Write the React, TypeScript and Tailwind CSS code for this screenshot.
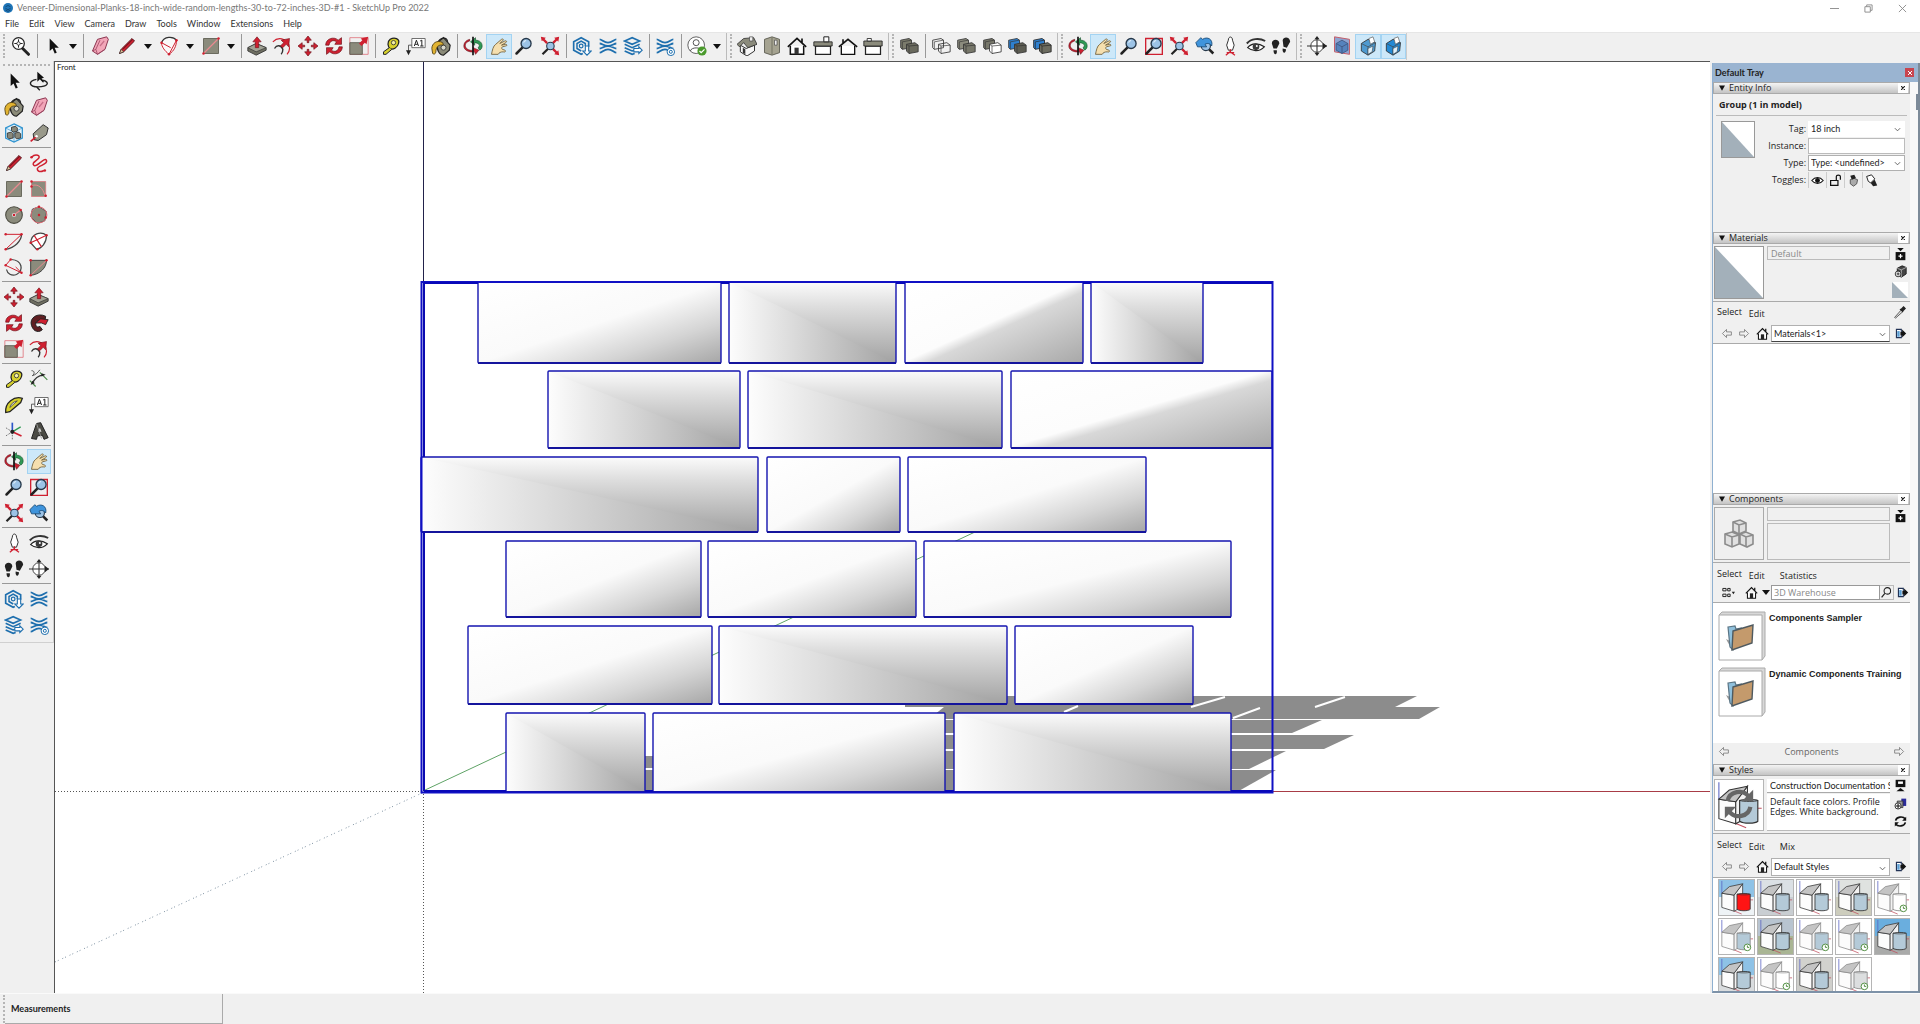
import React, { useState } from 'react'
import clsx from 'clsx'

const RED = '#cf2030'
const STONE = '#8b8b7c'
const BLUE = '#1e6fae'

const magnifier = (
  <>
    <path d="M10 14 3 21" stroke="#222" strokeWidth="3" strokeLinecap="round" />
    <circle cx="14.5" cy="9" r="6" fill="#9cc3e6" stroke="#26384a" strokeWidth="1.6" />
    <path d="M11.5 8a3.5 3.5 0 0 1 3-2.5" stroke="#e4f1fb" strokeWidth="1.3" />
  </>
)

const waves = (
  <path
    d="M2 4c3 0 5 4 10 4s7-4 10-4M2 9c3 0 5 3 10 3s7-3 10-3M2 15c3 0 5-3 10-3s7 3 10 3M2 20c3 0 5-4 10-4s7 4 10 4"
    stroke={BLUE}
    strokeWidth="2.2"
  />
)

const orbit = (
  <>
    <path d="M8 6C4 7 2 10 3 13s5 5 10 4l-1-3 7 3-4 5-1-3C7 20 1 17 1 12 1 8 4 5 8 4Z" fill={RED} stroke="#5a1018" strokeWidth=".7" />
    <path d="M15 5c5 0 8 3 8 7 0 2-1 4-3 5l-2-3c2-1 2-3 1-4s-3-2-5-2v3l-5-4 6-5Z" fill="#2f9a55" stroke="#124a26" strokeWidth=".7" />
    <path d="M12 1v22" stroke="#111" strokeWidth="2" />
  </>
)

const hand = (
  <path
    d="M3 22c1-5 2-10 5-12l7-6c1-1 3 0 2 1l-4 4 6-3c2-1 3 1 1 2l-5 3 5-1c2 0 2 2 0 2l-4 1c-1 1-1 2 0 3l3 1c2 1 0 3-2 2-3 0-5 1-6 3Z"
    fill="#f5dfae"
    stroke="#6e5a34"
    strokeWidth="1"
  />
)

const cursor = <path d="m8 3 0 15 3.500-3 2.500 6 2.500-1-2.500-6h5Z" fill="#111" />

const eraser = (
  <>
    <path d="M9 4 20 1l2 3-4 12-9 6-6-4Z" fill="#f2a6b8" stroke="#8a3550" strokeWidth="1.2" />
    <path d="m3 18 4-2 2 6M7 16 12 5M9 22l9-6" stroke="#a04864" strokeWidth="1" />
    <path d="m12 12 5-6" stroke="#c76f89" strokeWidth="1.500" />
  </>
)

const pencil = (
  <>
    <path d="m3 21 2-5L18 3l3 3L8 19Z" fill={RED} stroke="#4c0d14" strokeWidth="1.1" />
    <path d="m3 21 2-5 3 3Z" fill="#e8c79a" stroke="#333" strokeWidth=".8" />
    <path d="M7 16 19 4" stroke="#5d0f18" strokeWidth="1" />
  </>
)

const redDots = (points: [number, number][]) =>
  points.map(([x, y]) => <circle key={`${x}-${y}`} cx={x} cy={y} r="1.5" fill={RED} />)

const move = (
  <path
    d="m12 0 4 5h-3v3h-2V5H8Zm0 24 4-5h-3v-3h-2v3H8ZM0 12l5-4v3h3v2H5v3Zm24 0-5-4v3h-3v2h3v3Z"
    fill={RED}
    stroke="#6b0d16"
    strokeWidth=".8"
  />
)

const rotate = (
  <>
    <path d="M2 11c0-8 10-11 15-6l4-3v8h-8l2-3c-4-3-8-1-9 4Z" fill={RED} stroke="#6b0d16" strokeWidth=".8" />
    <path d="M22 13c0 8-10 11-15 6l-4 3v-8h8l-2 3c4 3 8 1 9-4Z" fill={RED} stroke="#6b0d16" strokeWidth=".8" />
  </>
)

const scale = (
  <>
    <path d="M1 2h22v20H1Z" stroke="#e0737d" strokeWidth="1" />
    <path d="M1 8h15v14H1Z" fill={STONE} stroke="#55554a" />
    <path d="m12 9 4-4-2-2 9-2-2 9-2-2-4 4Z" fill={RED} />
  </>
)

const pushPull = (
  <>
    <path d="m1 14 10-5 12 5v3l-12 6L1 18Z" fill="#6e6e61" stroke="#333" strokeWidth="1" />
    <path d="m1 14 10-5 12 5-12 5Z" fill="#a2a294" stroke="#333" strokeWidth=".8" />
    <path d="m12 1 5 6h-3v7h-4V7H7Z" fill={RED} stroke="#6b0d16" strokeWidth=".7" />
  </>
)

const offset = (
  <>
    <path d="M1 7C9-1 21 5 21 15c0 3-1 5-3 7" stroke={RED} strokeWidth="1.4" />
    <path d="M3 15c3-5 8-4 10 1 0 2 0 4-2 6" stroke="#333" strokeWidth="1.7" />
    <path d="m10 12 4-4-3-3 10-2-1 10-3-3-4 4Z" fill={RED} stroke="#6b0d16" strokeWidth=".7" />
  </>
)

const tape = (
  <>
    <path d="M11 4c5-3 12-1 10 5-1 5-7 8-10 6S7 7 11 4Z" fill="#d6d02c" stroke="#222" strokeWidth="1.5" />
    <circle cx="15" cy="8" r="2.600" fill="#f3f0a5" stroke="#333" />
    <path d="m10 14-7 5v3h3l7-6" fill="#d6d02c" stroke="#222" strokeWidth="1.2" />
  </>
)

const textTool = (
  <>
    <path d="M7 3h16v11H7Z" fill="#fff" stroke="#555" strokeWidth="1" />
    <path d="m10 12 2.500-7 2.500 7M11 10h3M17 6l2-1v7M17 12h4" stroke="#222" strokeWidth="1.2" />
    <path d="M7 11H3v8" stroke="#444" />
    <path d="m0 17 6 0-3 6Z" fill="#222" />
  </>
)

const bucket = (
  <>
    <path d="m8 8 7-6 8 9-1 6-7 6c-5 0-9-7-7-15Z" fill="#8a8a78" stroke="#222" strokeWidth="1.400" />
    <path d="M8 8C11 2 19 0 20 7" stroke="#222" strokeWidth="1.500" />
    <path d="M14 8C7 4 1 9 1 15l1 6c3 2 4-1 4-4 1-5 4-7 9-6Z" fill="#e2b432" stroke="#4a3a10" strokeWidth="1" />
    <circle cx="15" cy="14" r="3" fill="#d8d8ca" stroke="#333" />
  </>
)

const extentArrows = (
  <>
    <path d="m1 1 6 1-1.500 1.500 4 4-2 2-4-4L2 6ZM23 1l-1 6-1.500-1.500-4 4-2-2 4-4L17 2ZM23 23l-6-1 1.500-1.500-4-4 2-2 4 4L22 17Z" fill={RED} />
    <path d="M10 15 3 22" stroke="#222" strokeWidth="2.600" />
    <circle cx="12.500" cy="12" r="4.500" fill="#9cc3e6" stroke="#26384a" strokeWidth="1.300" />
  </>
)

const warehouse = (
  <>
    <path d="M20 13V7l-9-5-9 5v10l9 5 2-1" stroke={BLUE} strokeWidth="2" />
    <path d="M16 12V9l-5-3-5 3v6l5 3" stroke={BLUE} strokeWidth="1.800" />
    <circle cx="11" cy="12" r="2.200" stroke={BLUE} strokeWidth="1.500" />
    <path d="M16 12h4v6h3l-5 5-5-5h3Z" fill="#fff" stroke={BLUE} strokeWidth="1.300" />
  </>
)

const layout = (
  <>
    <path d="m2 6 9-4 9 4-9 4ZM2 10l9 4 9-4M2 14l9 4 3-1M2 18l9 4 3-1" stroke={BLUE} strokeWidth="1.900" />
    <path d="M13 15h6v-2l4 4-4 4v-2h-6Z" fill="#fff" stroke={BLUE} strokeWidth="1.300" />
  </>
)

const extManager = (
  <>
    {waves}
    <circle cx="19" cy="19" r="4.500" fill="#fff" stroke={BLUE} strokeWidth="1.200" />
    <circle cx="19" cy="19" r="1.800" stroke={BLUE} strokeWidth="1.200" />
  </>
)

const solid = (back: string, front: string, line = '#333') => (
  <>
    <path d="m2 5 10-2 3 2v9L4 16l-2-2Z" fill={back} stroke={line} strokeWidth="1" />
    <path d="m9 10 10-2 4 3v8l-11 2-3-3Z" fill={front} stroke={line} strokeWidth="1" />
    <path d="m9 10 3 2 11-1M12 12v9M15 5 4 7v9" stroke={line} strokeWidth=".8" />
  </>
)

const cube = (fill: string) => (
  <>
    <path d="m4 9 8-5 9 4-1 10-8 5-8-5Z" fill={fill} stroke="#333" strokeWidth="1" />
    <path d="m4 9 8 4 9-5M12 13v10" stroke="#444" strokeWidth=".8" />
    <path d="m13 3 5-2 2 6-5 3Z" fill="#fff" stroke="#555" strokeWidth=".8" />
    <path d="m12 15 6-3-1 7-5 3Z" fill="#dff0fa" stroke="#444" strokeWidth=".7" />
  </>
)

const homeIcon = (
  <>
    <path d="M4 12v10h16V12" fill="#fff" stroke="#111" strokeWidth="1.800" />
    <path d="M1 13 12 3l11 10M18 3v5" stroke="#111" strokeWidth="2" />
    <path d="M9 14h5v8H9Z" fill="#333" />
  </>
)

const icons: Record<string, React.ReactNode> = {
  search: (
    <>
      <path d="m14 15 7 7" stroke="#222" strokeWidth="3.500" strokeLinecap="round" />
      <circle cx="9" cy="9" r="7" fill="#fff" stroke="#222" strokeWidth="1.500" />
      <path d="M9 4v10M4 9h10" stroke="#222" strokeWidth="1.200" />
      <circle cx="9" cy="9" r="2" fill="#fff" stroke="#222" />
    </>
  ),
  cursor,
  eraser,
  pencil,
  arc: (
    <>
      <path d="M3 8C8-1 20 1 21 5c0 7-3 13-9 17C6 20 1 15 3 8Z" fill="#fafafa" />
      <path d="M3 8C6 0 17 0 21 5" stroke="#333" strokeWidth="1.500" />
      <path d="M21 5c0 7-3 13-9 17M3 8c0 5 4 10 9 14M3 8l11 6M21 5l-9 17" stroke={RED} strokeWidth="1.200" />
      {redDots([[3, 8], [21, 5], [12, 22]])}
    </>
  ),
  rectangle: (
    <>
      <path d="M3 3h18v18H3Z" fill={STONE} stroke="#5a5a4d" />
      <path d="M3 21 21 3" stroke="#e98a90" strokeWidth="1.400" />
      {redDots([[3, 21], [21, 3]])}
    </>
  ),
  rotatedRect: (
    <>
      <path d="M3 3h17v18H3Z" fill={STONE} stroke="#d77b80" />
      <path d="M3 8c8-3 14 3 16 12" stroke="#e98a90" strokeWidth="1.200" />
      {redDots([[3, 3], [3, 9], [20, 20]])}
    </>
  ),
  circle: (
    <>
      <circle cx="12" cy="12" r="10" fill={STONE} stroke="#4d4d42" strokeWidth="1.300" />
      <path d="m12 12 8-6" stroke="#e98a90" strokeWidth="1.300" />
      <circle cx="12" cy="12" r="2.500" fill="#ddd" />
      {redDots([[12, 12], [20, 6]])}
    </>
  ),
  polygon: (
    <>
      <path d="m12 2 9 6-2 11-9 3-8-8 2-9Z" fill={STONE} stroke="#555" strokeWidth="1.200" />
      <circle cx="12" cy="12" r="9.500" stroke="#dc6b73" strokeWidth="1.200" />
      {redDots([[12, 12], [12, 2], [20, 15]])}
    </>
  ),
  lineArc: (
    <>
      <path d="M21 4c0 8-8 16-19 18" stroke="#444" strokeWidth="1.600" />
      <path d="M2 4h19L2 22" stroke={RED} strokeWidth="1.200" />
      {redDots([[2, 4], [21, 4], [2, 22]])}
    </>
  ),
  twoArc: (
    <>
      <path d="M2 14C3 3 14 0 21 5c0 9-6 16-12 17Z" fill="#fff" stroke="#444" strokeWidth="1.500" />
      <path d="m6 5 9 14M2 14 21 5" stroke={RED} strokeWidth="1.400" />
      {redDots([[2, 14], [21, 5], [10, 22]])}
    </>
  ),
  threeArc: (
    <>
      <path d="M9 3c13 1 15 13 6 18-6 2-11-1-12-6" stroke="#444" strokeWidth="1.500" />
      <path d="M8 3 2 10l19 9-7-7" stroke={RED} strokeWidth="1.200" />
      {redDots([[2, 10], [21, 19], [8, 3]])}
    </>
  ),
  pie: (
    <>
      <path d="M2 4h19c0 9-8 17-19 18Z" fill={STONE} stroke="#444" strokeWidth="1.200" />
      <path d="M2 22 21 4" stroke="#e98a90" strokeWidth="1.200" />
      {redDots([[2, 4], [21, 4], [2, 22]])}
    </>
  ),
  freehand: (
    <>
      <path d="M3 5c5-5 12-2 8 2s-8 5-5 8 13-11 15-6-11 6-11 10 4 4 8 2" stroke={RED} strokeWidth="1.800" />
      {redDots([[3, 5], [19, 21]])}
    </>
  ),
  pushPull,
  offset,
  move,
  rotate,
  scale,
  tape,
  text: textTool,
  bucket,
  orbit,
  hand,
  zoom: magnifier,
  extents: extentArrows,
  warehouse,
  waves,
  layout,
  extManager,
  user: (
    <>
      <circle cx="11" cy="11" r="10" fill="#fff" stroke="#555" strokeWidth="1.100" />
      <circle cx="11" cy="8" r="3.600" stroke="#555" strokeWidth="1.200" />
      <path d="M4 18c1-5 13-5 14 0" stroke="#555" strokeWidth="1.200" />
      <circle cx="18" cy="18" r="5.500" fill="#4a9a2c" />
      <path d="m15 18 2 2 4-4" stroke="#fff" strokeWidth="1.500" />
    </>
  ),
  iso: (
    <>
      <path d="m4 11 7 4 10-4v7l-9 6-8-5Z" fill="#f7f7f7" stroke="#333" strokeWidth="1.200" />
      <path d="M0 10 8 3l12-1 4 8-11 4-5-6-5 5Z" fill={STONE} stroke="#333" strokeWidth="1" />
      <path d="M15 1h4v5h-4Z" fill="#eee" stroke="#444" strokeWidth=".8" />
      <path d="M7 14v6l3 2v-6Z" fill="#333" />
    </>
  ),
  top: (
    <>
      <path d="m3 4 9-3 9 3v16l-9 3-9-3Z" fill="#a5a391" stroke="#55554a" strokeWidth="1" />
      <path d="M12 2v20" stroke="#6a6a5c" />
      <path d="M15 5h3v6h-3Z" fill="#eee" stroke="#444" strokeWidth=".8" />
    </>
  ),
  front: homeIcon,
  right: (
    <>
      <path d="M3 12h18v10H3Z" fill="#fff" stroke="#222" strokeWidth="1.500" />
      <path d="M1 7h22v5H1Z" fill={STONE} stroke="#222" strokeWidth="1" />
      <path d="M13 1h6v6h-6Z" fill="#fff" stroke="#222" strokeWidth="1.200" />
    </>
  ),
  back: (
    <>
      <path d="M4 12v10h16V12" fill="#fff" stroke="#111" strokeWidth="1.600" />
      <path d="M1 13 12 4l11 9M6 4v5" stroke="#111" strokeWidth="1.900" />
    </>
  ),
  left: (
    <>
      <path d="M3 12h18v10H3Z" fill="#fff" stroke="#222" strokeWidth="1.500" />
      <path d="M1 6h22v6H1Z" fill={STONE} stroke="#222" strokeWidth="1" />
      <path d="M5 3h5v3H5Z" fill="#fff" stroke="#222" />
    </>
  ),
  outerShell: solid('#7b7b6c', '#6a6a5e'),
  intersect: solid('none', 'none'),
  union: solid('#8b8b7d', '#77776a'),
  subtract: solid('#77776a', '#fff'),
  trim: solid('#2f80cf', '#5c5c52'),
  split: solid('#2f80cf', '#6c6c60', '#222'),
  zoomWindow: (
    <>
      <path d="M2 3h20v19H2Z" stroke={RED} strokeWidth="1.600" />
      {magnifier}
    </>
  ),
  previous: (
    <>
      <path d="m14 13 8 8" stroke="#222" strokeWidth="3" />
      <circle cx="13" cy="12" r="5.500" fill="#9cc3e6" stroke="#26384a" strokeWidth="1.300" />
      <path d="m1 8 6-6 2 2c6-4 13 0 11 8-2-3-5-4-8-2l2 3H3Z" fill="#3f94dc" stroke="#16456f" strokeWidth="1" />
    </>
  ),
  position: (
    <>
      <path d="M10 5c0-5 5-5 5 0l2 6-2 6h-5l-2-6Z" fill="#fff" stroke="#333" strokeWidth="1.200" />
      <path d="M12.500 16v4M7 23l5-4 6 4M8 20h9" stroke={RED} strokeWidth="1.500" />
    </>
  ),
  look: (
    <>
      <path d="M1 9c5-6 15-7 22-3" stroke="#333" strokeWidth="2.400" />
      <path d="M2 14c5-6 13-6 20-1-6 6-14 6-20 1Z" fill="#fff" stroke="#222" strokeWidth="1.400" />
      <circle cx="12" cy="13" r="4" fill="#3b3b3b" />
      <circle cx="13" cy="12" r="1.200" fill="#fff" />
    </>
  ),
  walk: (
    <>
      <path d="M1 9c0-6 9-6 9 0l-3 6H3ZM3 17h4c1 6-4 7-4 0Z" fill="#222" />
      <path d="M14 5c1-5 9-4 9 2l-4 7-4-1ZM14 15l4 1c0 6-5 5-4-1Z" fill="#222" />
    </>
  ),
  section: (
    <>
      <circle cx="12" cy="12" r="7.500" fill="#fff" stroke="#444" strokeWidth="1.200" />
      <path d="M0 12h24M12 4v17" stroke="#333" strokeWidth="1.300" />
      <path d="m9 4 3-4 3 4ZM9 20l3 4 3-4ZM19 8l5 4-5 4Z" fill="#222" />
    </>
  ),
  sectionPlane: (
    <>
      <path d="m3 1 18 3v18L3 19Z" fill="#8ea3d0" stroke="#c4606b" strokeWidth="1.200" />
      <path d="m5 9 7-4 7 4v8l-7 4-7-4Z" fill="#5583bd" stroke="#40557f" />
      <path d="m5 9 7 4 7-4M12 13v8" stroke="#40557f" />
    </>
  ),
  sectionCut: cube('#4e9ad0'),
  sectionFill: cube('#2389d4'),
  lasso: (
    <>
      <path d="M9 10C-2 12 0 19 11 19s15-5 6-8M9 19l4 4" stroke="#222" strokeWidth="1.700" />
      <path d="m10 1 0 12 3-3 4 4 1-2-3-3 3-1Z" fill="#111" />
    </>
  ),
  components: (
    <>
      <path d="m12 1 10 5v12l-10 5-10-5V6Z" fill="#e3f2fa" stroke="#2f93cf" strokeWidth="1.500" />
      <path d="M2 6l10 5 10-5M12 11v12" stroke="#2f93cf" strokeWidth=".8" />
      <path d="m9 5 5-1 2 2v4l-5 1-2-2ZM4 12l5-1 2 2v5l-5 1-2-2ZM13 12l5-1 2 2v5l-5 1-2-2Z" fill="#88887a" stroke="#222" strokeWidth=".9" />
    </>
  ),
  tag: (
    <>
      <path d="M5 13 17 2l6 4-2 8-10 7-5-1Z" fill="#99998a" stroke="#333" strokeWidth="1.200" />
      <path d="m9 16-7 6" stroke={RED} strokeWidth="2" />
      <circle cx="9" cy="16" r="1.500" fill="#fff" />
    </>
  ),
  followMe: (
    <>
      <path d="M20 4C10-1 0 6 3 15s10 8 13 5l-3-4c-3 2-5 0-5-3 0-4 6-6 11-3Z" fill="#5f1f22" stroke="#222" strokeWidth="1.200" />
      <path d="m8 12 6-5 9 1-3 6-5-2Z" fill={RED} stroke="#222" />
    </>
  ),
  dimension: (
    <>
      <path d="M3 2c4 0 4 4 1 6 4-1 7-4 9-7" stroke="#444" strokeWidth="1.100" />
      <path d="m1 14 7 7M13 4l9 9" stroke="#4b8a49" strokeWidth="1.400" />
      <path d="M4 17C7 11 11 8 17 7" stroke="#333" strokeWidth="1.400" />
      <path d="m2 19 2-5 3 3ZM20 7l-5-2v4Z" fill="#222" />
    </>
  ),
  protractor: (
    <>
      <path d="M2 21C1 9 12 1 22 4L20 9 7 20Z" fill="#d6d02c" stroke="#222" strokeWidth="1.500" />
      <path d="M7 15c1-4 4-7 9-8Z" fill="#f0f0f0" stroke="#444" />
    </>
  ),
  axes: (
    <>
      <path d="M10 13V2" stroke="#2b55c9" strokeWidth="2" />
      <path d="m10 13 11 5" stroke={RED} strokeWidth="2" />
      <path d="m10 13 10-6" stroke="#2f9a55" strokeWidth="1.600" />
      <path d="M10 13v9M10 13l-8 5M10 13 2 8" stroke="#777" strokeWidth="1.200" strokeDasharray="2 1.500" />
      <circle cx="10" cy="13" r="2.500" fill="#222" />
    </>
  ),
  text3d: (
    <>
      <path d="m3 21 6-18 5-1 9 18-5 2-2-5-6 1-1 4Z" fill="#4a4a44" stroke="#222" strokeWidth="1.200" />
      <path d="m11 13 2-5 2 5Z" fill="#ddd" />
      <path d="m9 3 6 18" stroke="#999" />
    </>
  ),
}

function Icon({ name, className = 'w-5 h-5' }: { name: string; className?: string }) {
  return (
    <svg viewBox="0 0 24 24" fill="none" className={clsx('shrink-0', className)} aria-hidden="true">
      {icons[name]}
    </svg>
  )
}

interface ToolButtonProps {
  name: string
  active?: boolean
}

function ToolButton({ name, active }: ToolButtonProps) {
  return (
    <button
      aria-label={name}
      className={clsx(
        'flex items-center justify-center h-[25px] min-w-0 flex-1 border',
        active ? 'bg-[#cde8f9] border-[#a3d3f2]' : 'border-transparent hover:bg-[#e0eef8]'
      )}
    >
      <Icon name={name} />
    </button>
  )
}

function ToolGroup({ names, active = [], className }: { names: string[]; active?: string[]; className: string }) {
  return (
    <div className={clsx('flex shrink-0 items-center', className)}>
      {names.map(name => (
        <ToolButton key={name} name={name} active={active.includes(name)} />
      ))}
    </div>
  )
}

function Caret() {
  return (
    <svg viewBox="0 0 8 5" className="w-2 h-[5px]" aria-hidden="true">
      <path d="M0 0h8L4 5Z" fill="#111" />
    </svg>
  )
}

function MenuTool({ name, className }: { name: string; className: string }) {
  return (
    <div className={clsx('flex shrink-0 items-center', className)}>
      <div className="flex w-[26px]">
        <ToolButton name={name} />
      </div>
      <button aria-label={`${name} options`} className="flex flex-1 justify-center py-2">
        <Caret />
      </button>
    </div>
  )
}

const Sep = () => (
  <div className="flex w-[6px] h-[24px] shrink-0 justify-center">
    <div className="w-px bg-[#999]" />
  </div>
)

const Grip = () => (
  <div className="ml-0.5 flex w-2 h-[27px] shrink-0 items-center border-l border-[#bbb] pl-[3px]">
    <div className="h-[24px] border-l-2 border-dotted border-[#b5b5b5]" />
  </div>
)

function TopToolbar() {
  return (
    <div className="flex h-[29px] shrink-0 items-center overflow-hidden border-t border-[#e6e6e6] bg-[#f0f0f0] pb-0.5">
      <div className="ml-[3px] h-[24px] w-[5px] border-l-2 border-dotted border-[#b5b5b5]" />
      <ToolGroup names={['search']} className="w-[26px]" />
      <Sep />
      <MenuTool name="cursor" className="w-10" />
      <Sep />
      <ToolGroup names={['eraser']} className="w-7" />
      <MenuTool name="pencil" className="w-[42px]" />
      <MenuTool name="arc" className="w-[42px]" />
      <MenuTool name="rectangle" className="w-10" />
      <Sep />
      <ToolGroup names={['pushPull', 'offset', 'move', 'rotate', 'scale']} className="w-32" />
      <Sep />
      <ToolGroup names={['tape', 'text', 'bucket']} className="w-[76px]" />
      <Sep />
      <ToolGroup names={['orbit', 'hand', 'zoom', 'extents']} active={['hand']} className="w-[103px]" />
      <Sep />
      <ToolGroup names={['warehouse', 'waves', 'layout']} className="w-[77px]" />
      <Sep />
      <ToolGroup names={['extManager']} className="w-[26px]" />
      <Sep />
      <MenuTool name="user" className="w-10" />
      <Grip />
      <ToolGroup names={['iso', 'top', 'front', 'right', 'back', 'left']} className="w-[152px]" />
      <Grip />
      <ToolGroup names={['outerShell']} className="w-[26px]" />
      <Sep />
      <ToolGroup names={['intersect', 'union', 'subtract', 'trim', 'split']} className="w-[127px]" />
      <Grip />
      <ToolGroup
        names={['orbit', 'hand', 'zoom', 'zoomWindow', 'extents', 'previous', 'position', 'look', 'walk']}
        active={['hand']}
        className="w-[229px]"
      />
      <Grip />
      <ToolGroup
        names={['section', 'sectionPlane', 'sectionCut', 'sectionFill']}
        active={['sectionCut', 'sectionFill']}
        className="w-[102px]"
      />
      <div className="h-[27px] border-l border-[#ccc]" />
    </div>
  )
}

const sideGroups = [
  ['cursor', 'lasso', 'bucket', 'eraser', 'components', 'tag'],
  ['pencil', 'freehand', 'rectangle', 'rotatedRect', 'circle', 'polygon', 'lineArc', 'twoArc', 'threeArc', 'pie'],
  ['move', 'pushPull', 'rotate', 'followMe', 'scale', 'offset'],
  ['tape', 'dimension', 'protractor', 'text', 'axes', 'text3d'],
  ['orbit', 'hand', 'zoom', 'zoomWindow', 'extents', 'previous'],
  ['position', 'look', 'walk', 'section'],
  ['warehouse', 'waves', 'layout', 'extManager'],
]

function SideToolbar() {
  return (
    <aside className="w-[54px] shrink-0 bg-[#f0f0f0]">
      <div className="border-r border-b border-[#d0d0d0] px-[2px] pt-[3px] pb-1">
        <div className="mx-px mb-0.5 border-t-2 border-dotted border-[#b5b5b5]" />
        {sideGroups.map((group, i) => (
          <div key={i} className={clsx('grid grid-cols-2', i > 0 && 'mt-px border-t border-[#999] pt-0.5')}>
            {group.map(name => (
              <div key={name} className="flex h-[26px] items-center">
                <ToolButton name={name} active={name === 'hand'} />
              </div>
            ))}
          </div>
        ))}
      </div>
    </aside>
  )
}

// x, y, width, height, shading
type Plank = [number, number, number, number, 'corner' | 'soft' | 'sharp']

const planks: Plank[] = [
  [478, 282, 243, 81, 'soft'],
  [729, 282, 167, 81, 'corner'],
  [905, 282, 178, 81, 'sharp'],
  [1091, 282, 112, 81, 'corner'],
  [548, 371, 192, 77, 'corner'],
  [748, 371, 254, 77, 'corner'],
  [1011, 371, 261, 77, 'sharp'],
  [421, 457, 337, 75, 'corner'],
  [767, 457, 133, 75, 'soft'],
  [908, 457, 238, 75, 'soft'],
  [506, 541, 195, 76, 'soft'],
  [708, 541, 208, 76, 'soft'],
  [924, 541, 307, 76, 'soft'],
  [468, 626, 244, 78, 'soft'],
  [719, 626, 288, 78, 'corner'],
  [1015, 626, 178, 78, 'soft'],
  [506, 713, 139, 79, 'corner'],
  [653, 713, 292, 79, 'soft'],
  [954, 713, 277, 79, 'corner'],
]

function Viewport() {
  return (
    <main className="relative min-w-0 flex-1 overflow-hidden border-t border-l border-[#555] bg-white">
      <svg className="block h-full w-full" aria-label="Front view of the plank group">
        <defs>
          <linearGradient id="soft" x1="0" y1="0" x2="1" y2="1">
            <stop offset="0" stopColor="#fff" />
            <stop offset=".5" stopColor="#fafafa" />
            <stop offset=".75" stopColor="#d4d4d4" />
            <stop offset="1" stopColor="#a6a6a6" />
          </linearGradient>
          <linearGradient id="sharp" x1="0" y1="0" x2="1" y2="1">
            <stop offset="0" stopColor="#fff" />
            <stop offset=".49" stopColor="#fcfcfc" />
            <stop offset=".56" stopColor="#d8d8d8" />
            <stop offset="1" stopColor="#a8a8a8" />
          </linearGradient>
          <linearGradient id="down" x1="0" y1="0" x2="0" y2="1">
            <stop offset="0" stopColor="#fbfbfb" />
            <stop offset=".3" stopColor="#dedede" />
            <stop offset="1" stopColor="#a2a2a2" />
          </linearGradient>
          <linearGradient id="across" x1="0" y1="0" x2="1" y2="0">
            <stop offset="0" stopColor="#fdfdfd" />
            <stop offset=".35" stopColor="#dedede" />
            <stop offset="1" stopColor="#a2a2a2" />
          </linearGradient>
        </defs>
        <g transform="translate(-55 -62)">
          {/* shadows on the ground */}
          <g fill="#8c8c8c">
            <path d="M1007 696h410l-22 11H905v-3h102Z" />
            <path d="M944 707h496l-21 12H929Z" />
            <path d="M944 720h378l-30 13H944Z" />
            <path d="M944 735h410l-30 14H944Z" />
            <path d="M944 751h342l-37 18H944Z" />
            <path d="M944 770h332l-39 22H944Z" />
            <path d="M645 756h9v12h-9ZM645 770h9v22h-9Z" />
          </g>
          <path d="m1225 697-34 10M1345 697l-30 10M1260 708l-27 10M1078 706l-14 6" stroke="#fff" strokeWidth="2" />
          {/* axes */}
          <path d="M423 791 975 532" stroke="#5fa366" />
          <path d="M1273 791.500h3000" stroke="#a83c46" />
          <path d="M55 791.500h367M423.500 794v2000" stroke="#555" strokeDasharray="1 2" />
          <path d="M422 793 55 962" stroke="#7f93a3" strokeDasharray="1 2 1 4" />
          <path d="M423.500 62v220" stroke="#22224a" />
          {planks.map(([x, y, w, h, shade]) => (
            <g key={`${x}-${y}`}>
              <rect x={x} y={y} width={w} height={h} fill={shade === 'corner' ? 'url(#down)' : shade === 'soft' ? 'url(#soft)' : 'url(#sharp)'} />
              {shade === 'corner' && (
                <svg x={x} y={y} width={w} height={h} viewBox="0 0 10 10" preserveAspectRatio="none">
                  <path d="M0 0v10h10Z" fill="url(#across)" />
                </svg>
              )}
              <rect x={x} y={y} width={w} height={h} rx="1" fill="none" stroke="#1414b0" strokeWidth="1.400" />
              <path d={`M${x} ${y + h}h${w}`} stroke="#14149c" strokeWidth="2" />
            </g>
          ))}
          {/* bounding box */}
          <path d="M421.500 282h851v510.500h-851Z" fill="none" stroke="#1010c4" strokeWidth="2" />
          <path d="M424 283v174M424 532v259" stroke="#0a0ab0" strokeWidth="2" />
          <path d="M424 283h54M1203 283h69M721 283h8M896 283h9M1083 283h8M424 791h82M645 791h8M945 791h9M1231 791h41" stroke="#0808b8" strokeWidth="2" />
        </g>
      </svg>
      <span className="absolute top-0 left-[2px] text-[8px] leading-[10px]">Front</span>
    </main>
  )
}

function SmallIcon({ kind, className = 'w-[13px] h-[13px]' }: { kind: string; className?: string }) {
  const shapes: Record<string, React.ReactNode> = {
    back: <path d="m3 8 5-5v3h6v4H8v3Z" stroke="#777" />,
    forward: <path d="M13 8 8 3v3H2v4h6v3Z" stroke="#777" />,
    home: (
      <>
        <path d="M3 8v7h10V8" fill="#fff" stroke="#111" strokeWidth="1.300" />
        <path d="m1 9 7-7 7 7M12 2v4" stroke="#111" strokeWidth="1.500" />
        <path d="M6 9h4v6H6Z" fill="#222" />
      </>
    ),
    details: (
      <>
        <path d="M3 3h6v10H3Z" fill="#fff" stroke="#235" strokeWidth="1.400" />
        <path d="M4 5h3v7H4Z" fill="#5a9ed4" />
        <path d="M8 6h2V3l5 5-5 5v-3H8Z" fill="#111" />
      </>
    ),
    pane: (
      <>
        <path d="M4 0h8L8 4Z" fill="#111" />
        <path d="M2 5h12v10H2Z" fill="#111" />
        <path d="M8 7.500v5M5.500 10h5" stroke="#fff" strokeWidth="1.500" />
      </>
    ),
    paneUp: (
      <>
        <path d="M2 1h12v9H2Z" fill="#111" />
        <path d="M5 3h6v3H5Z" fill="#fff" />
        <path d="m3 15 5-4 5 4Z" fill="#111" />
      </>
    ),
    create: (
      <>
        <path d="m4 4 6-3 5 2v8l-6 4-5-3Z" fill="#444" stroke="#111" />
        <path d="m4 4 5 2 6-3M9 6v9" stroke="#bbb" />
        <circle cx="5" cy="11" r="3.500" fill="#fff" stroke="#111" />
        <path d="M5 9v4M3 11h4" stroke="#111" />
      </>
    ),
    newStyle: (
      <>
        <path d="M9 2h6v9H9Z" fill="#2b2b9a" />
        <path d="M4 5h7v8H4Z" fill="#999" stroke="#333" />
        <circle cx="5" cy="11" r="3.800" fill="#fff" stroke="#111" />
        <path d="M5 8v6M2 11h6" stroke="#111" strokeWidth="1.300" />
      </>
    ),
    refresh: (
      <>
        <path d="M2 7c1-5 9-6 12-2M14 9c-1 5-9 6-12 2" stroke="#111" strokeWidth="2" />
        <path d="M15 2v5h-5ZM1 14V9h5Z" fill="#111" />
      </>
    ),
    dropper: (
      <>
        <path d="m2 14 8-9 2 2-9 8Z" fill="#ddd" stroke="#444" />
        <path d="m8 4 2-1 3-3 3 3-3 3-1 2Z" fill="#222" />
      </>
    ),
    eye: (
      <>
        <path d="M1 8c4-5 10-5 14 0-4 5-10 5-14 0Z" fill="#fff" stroke="#111" strokeWidth="1.400" />
        <circle cx="8" cy="8" r="3" fill="#111" />
      </>
    ),
    lock: <path d="M2 8h9v6H2ZM9 8V3c0-2 5-2 5 0v4" stroke="#111" strokeWidth="1.500" />,
    receive: (
      <>
        <path d="m4 7 4-2 5 2-1 5-4 3-4-3Z" fill="#aaa" stroke="#444" />
        <path d="m4 2 5-1 2 4-5 2Z" fill="#222" />
      </>
    ),
    cast: (
      <>
        <path d="m2 3 6-2 4 5-5 5-3-2Z" fill="#fff" stroke="#222" strokeWidth="1.200" />
        <path d="m7 11 5-4 3 7-5 1Z" fill="#222" />
      </>
    ),
    list: (
      <>
        <path d="M1 3h4v3H1ZM7 3h3v3H7ZM1 10h4v3H1ZM7 10h3v3H7Z" stroke="#222" strokeWidth="1.200" />
        <path d="M12 7h4l-2 3Z" fill="#222" />
      </>
    ),
    find: (
      <>
        <circle cx="9" cy="6" r="4" stroke="#222" strokeWidth="1.300" />
        <path d="m6 9-4 5" stroke="#222" strokeWidth="1.500" />
      </>
    ),
  }
  return (
    <svg viewBox="0 0 16 16" fill="none" className={clsx('shrink-0', className)} aria-hidden="true">
      {shapes[kind]}
    </svg>
  )
}

function IconButton({ kind, className }: { kind: string; className?: string }) {
  return (
    <button aria-label={kind} className={clsx('flex shrink-0 items-center justify-center', className)}>
      <SmallIcon kind={kind} />
    </button>
  )
}

function PanelHeader({ title }: { title: string }) {
  return (
    <header className="flex h-3 shrink-0 items-center border border-[#aaa] bg-linear-to-b from-[#f4f4f4] to-[#c4c4c4] pl-[5px]">
      <svg viewBox="0 0 8 7" className="w-[6px] h-[6px]" aria-hidden="true">
        <path d="M0 0h8L4 7Z" fill="#111" />
      </svg>
      <h2 className="ml-1 flex-1 leading-[10px]">{title}</h2>
      <button aria-label={`Close ${title}`} className="mr-px flex h-[10px] w-[10px] items-center justify-center bg-white">
        <svg viewBox="0 0 6 6" className="w-1 h-1" aria-hidden="true">
          <path d="m0 0 6 6M6 0 0 6" stroke="#222" strokeWidth="1.800" />
        </svg>
      </button>
    </header>
  )
}

// two-tone front/back face swatch
function Swatch({ className }: { className: string }) {
  return (
    <svg viewBox="0 0 10 10" preserveAspectRatio="none" className={className} aria-hidden="true">
      <path d="M0 0h10v10H0Z" fill="#fff" />
      <path d="M0 0v10h10Z" fill="#a3b0ba" />
    </svg>
  )
}

function SelectBox({ id, options, className }: { id: string; options: string[]; className?: string }) {
  return (
    <div className={clsx('relative border border-[#b0b0b0] bg-white', className)}>
      <select id={id} aria-label={id} className="block h-full w-full appearance-none pr-4 pl-0.5 font-['Lato',sans-serif] outline-none">
        {options.map(option => (
          <option key={option}>{option}</option>
        ))}
      </select>
      <svg viewBox="0 0 8 5" fill="none" className="pointer-events-none absolute right-[3px] bottom-1 w-[7px] h-[5px]" aria-hidden="true">
        <path d="m1 1 3 3 3-3" stroke="#555" />
      </svg>
    </div>
  )
}

function Tabs({ labels }: { labels: string[] }) {
  const [current, setCurrent] = useState(0)
  return (
    <div className="flex gap-[7px] pl-1">
      {labels.map((label, i) => (
        <button
          key={label}
          onClick={() => setCurrent(i)}
          className={clsx('leading-3', label === 'Statistics' || label === 'Mix' ? 'ml-2' : '', i === current ? 'mb-0.5' : 'mt-0.5')}
        >
          {label}
        </button>
      ))}
    </div>
  )
}

function EntityInfo() {
  return (
    <section className="h-[150px] shrink-0">
      <PanelHeader title="Entity Info" />
      <h3 className="mx-[3px] flex h-[22px] items-center border-b border-[#bbb] pl-[3px] font-bold">Group (1 in model)</h3>
      <div className="flex pt-[5px]">
        <Swatch className="ml-2 w-[34px] h-[37px] border border-[#999]" />
        <div className="ml-3 grid flex-1 grid-cols-[41px_1fr] items-center gap-y-px pr-[5px]">
          <label htmlFor="Tag" className="pr-0.5 text-right">Tag:</label>
          <SelectBox id="Tag" options={['18 inch']} className="h-4 border-transparent" />
          <label htmlFor="instance" className="pr-0.5 text-right">Instance:</label>
          <input id="instance" className="h-4 w-full border border-[#bbb] bg-white px-1 outline-none" />
          <label htmlFor="Type" className="pr-0.5 text-right">Type:</label>
          <SelectBox id="Type" options={['Type: <undefined>']} className="h-4" />
          <span className="pr-0.5 text-right">Toggles:</span>
          <div className="flex h-4 items-center">
            {['eye', 'lock', 'receive', 'cast'].map(kind => (
              <IconButton key={kind} kind={kind} className="h-4 w-[18px] border-l border-[#ccc]" />
            ))}
          </div>
        </div>
      </div>
    </section>
  )
}

function Materials() {
  return (
    <section className="flex h-[261px] shrink-0 flex-col">
      <PanelHeader title="Materials" />
      <div className="flex h-[58px] border-b border-[#aaa] pt-0.5 pl-px">
        <Swatch className="w-[50px] h-[53px] border border-[#999]" />
        <input aria-label="Material name" defaultValue="Default" className="ml-[3px] h-[14px] w-[123px] border border-[#bbb] bg-transparent px-[3px] text-[#888] outline-none" />
        <div className="flex flex-1 flex-col items-center gap-1 pt-0.5">
          <IconButton kind="pane" />
          <IconButton kind="create" />
          <Swatch className="w-4 h-4" />
        </div>
      </div>
      <div className="flex h-[22px] items-center justify-between pr-1 pb-px">
        <Tabs labels={['Select', 'Edit']} />
        <IconButton kind="dropper" />
      </div>
      <div className="flex h-5 shrink-0 items-center border-b border-[#aaa] pl-1">
        <IconButton kind="back" className="w-[18px]" />
        <IconButton kind="forward" className="w-[18px]" />
        <IconButton kind="home" className="w-[18px]" />
        <SelectBox id="Material list" options={['Materials<1>']} className="h-[17px] w-[119px] border-b-[#444]" />
        <IconButton kind="details" className="flex-1" />
      </div>
      <div className="flex-1 bg-white" />
    </section>
  )
}

function FolderThumb() {
  return (
    <svg viewBox="0 0 48 50" fill="none" className="w-12 h-[50px]" aria-hidden="true">
      <path d="m1 4 3-3h43v44l-3 4" fill="#d8d8d8" stroke="#aaa" />
      <path d="M1 4h43v45H1Z" fill="#fff" stroke="#aaa" />
      <path d="m8 28 6 3v8Z" fill="#999" />
      <path d="m10 16 7-1 1 3 5-1-8 22-3-3Z" fill="#8fc0dc" stroke="#5a7484" strokeWidth="1.200" />
      <path d="m15 20 20-6-1 18-20 7Z" fill="#c49a6c" stroke="#4f5a60" strokeWidth="1.400" />
    </svg>
  )
}

function Components() {
  return (
    <section className="flex h-[271px] shrink-0 flex-col">
      <PanelHeader title="Components" />
      <div className="flex h-[58px] border-b border-[#aaa] pt-0.5 pl-px">
        <div className="flex h-[53px] w-[50px] items-center justify-center border border-[#aaa]">
          <svg viewBox="0 0 30 30" fill="#e0e0e0" stroke="#8c8c8c" strokeWidth="1.600" className="w-[30px] h-[30px]" aria-hidden="true">
            <path d="m9 3 7-2 6 3v8l-7 3-6-3ZM1 15l7-2 7 3v9l-7 3-7-3ZM16 15l6-2 7 3v9l-6 3-7-3Z" />
            <path d="m9 3 6 3 7-2M15 6v9M1 15l7 3 7-2M8 18v10M16 15l6 3 7-2M22 18v10" fill="none" />
          </svg>
        </div>
        <div className="ml-[3px] flex w-[123px] flex-col gap-[2px]">
          <input aria-label="Component name" className="h-[14px] w-full border border-[#bbb] bg-transparent px-1 outline-none" />
          <textarea aria-label="Component description" className="h-[37px] w-full resize-none border border-[#bbb] bg-transparent px-1 outline-none" />
        </div>
        <div className="flex flex-1 justify-center pt-0.5">
          <IconButton kind="pane" className="h-[14px]" />
        </div>
      </div>
      <div className="flex h-5 items-center pt-1">
        <Tabs labels={['Select', 'Edit', 'Statistics']} />
      </div>
      <div className="flex h-5 shrink-0 items-center border-b border-[#aaa] pl-1.5">
        <IconButton kind="list" className="w-[18px]" />
        <IconButton kind="home" className="ml-[5px] w-[18px]" />
        <button aria-label="Open location menu" className="flex w-[11px] justify-center">
          <Caret />
        </button>
        <input
          aria-label="Search 3D Warehouse"
          placeholder="3D Warehouse"
          className="h-[15px] w-[109px] border border-[#999] bg-white px-0.5 outline-none placeholder:text-[#888]"
        />
        <IconButton kind="find" className="h-[15px] w-[14px] border border-l-0 border-[#bbb]" />
        <IconButton kind="details" className="flex-1" />
      </div>
      <ul className="flex-1 bg-white pt-2 pl-[5px] font-['Liberation_Sans'] font-bold">
        {['Components Sampler', 'Dynamic Components Training'].map(name => (
          <li key={name} className="mb-[6px] flex gap-[3px] leading-[14px]">
            <FolderThumb />
            <span className="whitespace-nowrap">{name}</span>
          </li>
        ))}
      </ul>
      <div className="flex h-[21px] shrink-0 items-center justify-between px-1 pb-1 text-[#666]">
        <IconButton kind="back" />
        <span>Components</span>
        <IconButton kind="forward" />
      </div>
    </section>
  )
}

interface StyleThumbProps {
  sky?: string
  ground?: string
  cylinder?: string
  clock?: boolean
  className?: string
}

function StyleThumb({ sky = '#fff', ground = '#fff', cylinder = '#b4cad8', clock, className = 'w-[37px] h-[37px]' }: StyleThumbProps) {
  const line = clock ? '#888' : '#333'
  return (
    <svg viewBox="0 0 37 37" fill="none" className={clsx('shrink-0 border border-[#b5b5b5]', className)} aria-hidden="true">
      <path d="M0 0h37v20H0Z" fill={sky} />
      <path d="M0 18h37v19H0Z" fill={ground} />
      <path d="M3 1v13" stroke="#5560c0" strokeWidth=".8" />
      <path d="m12 31 12 5M33 21h3" stroke="#c05060" strokeWidth=".8" />
      <path d="m3 14 13 2v17L3 29Z" fill="#fcfcfc" stroke={line} strokeWidth=".8" />
      <path d="m16 16 9-12v24l-9 5Z" fill="#f2f2f2" stroke={line} strokeWidth=".8" />
      <path d="m3 14 8-7 14-3-9 12Z" fill="#c4c4c4" stroke={line} strokeWidth=".8" />
      <path d="M19 15c3-1 12-1 14 0v16c-2 2-11 2-14 0Z" fill={cylinder} stroke={line} strokeWidth=".9" />
      <path d="M19 15c3 1 12 1 14 0" stroke={line} strokeWidth=".7" />
      {clock && (
        <>
          <circle cx="30" cy="30" r="3.500" fill="#fff" stroke="#4a8a3a" />
          <path d="M30 28v2h2" stroke="#4a8a3a" />
        </>
      )}
    </svg>
  )
}

const styleThumbs: StyleThumbProps[] = [
  { sky: '#8ec2e6', ground: '#eef3f6', cylinder: '#ff1414' },
  { sky: '#dbe0e4', ground: '#c9ced2' },
  {},
  { sky: '#dfe2e0', ground: '#cdcdbd' },
  { cylinder: '#fff', clock: true },
  { clock: true },
  { sky: '#b8c4d0', ground: '#a9b594' },
  { clock: true },
  { clock: true },
  { sky: '#6aaede', ground: '#a9aaa9' },
  { sky: '#8ec2e6', ground: '#d9dcde' },
  { cylinder: '#fff', clock: true },
  { sky: '#d2d2ce', ground: '#cfcfcb' },
  { cylinder: '#dcdedf', clock: true },
]

function Styles() {
  return (
    <section className="flex min-h-0 flex-1 flex-col">
      <PanelHeader title="Styles" />
      <div className="flex h-[58px] shrink-0 border-b border-[#aaa] pt-[3px] pl-px">
        <div className="relative">
          <StyleThumb className="w-[50px] h-[52px] bg-white" />
          <svg viewBox="0 0 24 24" fill="none" className="absolute top-2 left-2 w-[34px] h-[34px]" aria-hidden="true">
            <path d="M4 10c1-7 11-9 15-3M20 14c-1 7-11 9-15 3" stroke="#666" strokeWidth="3" />
            <path d="M22 2v8h-8ZM2 22v-8h8Z" fill="#666" />
          </svg>
        </div>
        <div className="ml-[3px] w-[123px] leading-[10px]">
          <input
            aria-label="Style name"
            defaultValue="Construction Documentation Style"
            className="block h-[14px] w-full border-b border-[#aaa] bg-white pl-[3px] font-['Lato',sans-serif] outline-none"
          />
          <textarea
            aria-label="Style description"
            defaultValue="Default face colors. Profile Edges. White background."
            className="mt-px block h-[37px] w-full resize-none overflow-hidden border-b border-[#bbb] bg-white pt-[3px] pr-2 pl-[3px] outline-none"
          />
        </div>
        <div className="flex flex-1 flex-col items-center gap-[5px]">
          <IconButton kind="paneUp" />
          <IconButton kind="newStyle" />
          <IconButton kind="refresh" />
        </div>
      </div>
      <div className="flex h-[22px] shrink-0 items-center pt-0.5">
        <Tabs labels={['Select', 'Edit', 'Mix']} />
      </div>
      <div className="flex h-[22px] shrink-0 items-center border-b border-[#aaa] pl-1">
        <IconButton kind="back" className="w-[18px]" />
        <IconButton kind="forward" className="w-[18px]" />
        <IconButton kind="home" className="w-[18px]" />
        <SelectBox id="Style list" options={['Default Styles']} className="h-[18px] w-[119px]" />
        <IconButton kind="details" className="flex-1" />
      </div>
      <div className="grid min-h-0 flex-1 grid-cols-[repeat(5,37px)] content-start gap-0.5 overflow-hidden bg-white pt-px pl-[5px]">
        {styleThumbs.map((thumb, i) => (
          <StyleThumb key={i} {...thumb} />
        ))}
      </div>
    </section>
  )
}

function Tray() {
  return (
    <aside className="mt-0.5 ml-0.5 flex w-[208px] shrink-0 flex-col border-r-2 border-b-2 border-l border-r-[#7d8b99] border-b-[#7d92a8] border-l-[#8fb0d0] bg-[#f0f0f0] font-['Open_Sans',sans-serif]">
      <div className="flex h-[19px] shrink-0 items-center justify-between bg-[#9ab4d1] pr-1 pl-0.5">
        <h1 className="font-['Lato',sans-serif] font-bold">Default Tray</h1>
        <button aria-label="Close tray" className="flex h-[9px] w-[9px] items-center justify-center bg-[#c8454f] text-white">
          <svg viewBox="0 0 6 6" className="w-1 h-1" aria-hidden="true">
            <path d="m0 0 6 6M6 0 0 6" stroke="currentColor" strokeWidth="1.500" />
          </svg>
        </button>
      </div>
      <div className="flex min-h-0 flex-1">
        <div className="flex w-[197px] flex-col overflow-hidden">
          <EntityInfo />
          <Materials />
          <Components />
          <Styles />
        </div>
        <div className="flex-1 bg-[#f8f8f8]">
          <div className="ml-auto mt-3 h-4 w-0.5 bg-[#7d8b99]" />
        </div>
      </div>
    </aside>
  )
}

export default function App() {
  return (
    <div className="flex h-screen flex-col overflow-hidden bg-[#f0f0f0] font-['Lato',sans-serif] text-[9px] text-[#222]">
      <div className="flex h-4 shrink-0 items-center bg-white pl-[3px]">
        <svg viewBox="0 0 12 12" className="w-[10px] h-[10px]" aria-hidden="true">
          <circle cx="6" cy="6" r="6" fill="#1f75b8" />
          <path d="M3 4.500 6 3l3 1.500M3 6.500 6 8l3-1.500M3 8.500 6 10l3-1.500" fill="none" stroke="#0f4570" strokeWidth="1" />
        </svg>
        <h1 className="ml-1 flex-1 text-[#777]">
          Veneer-Dimensional-Planks-18-inch-wide-random-lengths-30-to-72-inches-3D-#1 - SketchUp Pro 2022
        </h1>
        <div className="flex w-[90px] justify-between pr-[13px] text-[#888]">
          {['M0 5h10', 'M1 3h6v6H1ZM3 3V1h6v6H7', 'M1 1l8 8M9 1 1 9'].map(d => (
            <button key={d} aria-label="Window control">
              <svg viewBox="0 0 10 10" fill="none" className="w-[9px] h-[9px]" aria-hidden="true">
                <path d={d} stroke="currentColor" />
              </svg>
            </button>
          ))}
        </div>
      </div>
      <nav className="flex h-4 shrink-0 items-center gap-[10px] bg-white pl-[5px] text-[#333]">
        {['File', 'Edit', 'View', 'Camera', 'Draw', 'Tools', 'Window', 'Extensions', 'Help'].map(item => (
          <button key={item}>{item}</button>
        ))}
      </nav>
      <TopToolbar />
      <div className="flex min-h-0 flex-1">
        <SideToolbar />
        <Viewport />
        <Tray />
      </div>
      <footer className="flex h-[31px] shrink-0 items-stretch border-t border-[#fafafa]">
        <div className="my-px ml-[3px] border-l-2 border-dotted border-[#b5b5b5]" />
        <div className="flex w-[218px] items-center border-r border-b border-[#aaa] pl-1.5 font-bold">Measurements</div>
      </footer>
    </div>
  )
}
